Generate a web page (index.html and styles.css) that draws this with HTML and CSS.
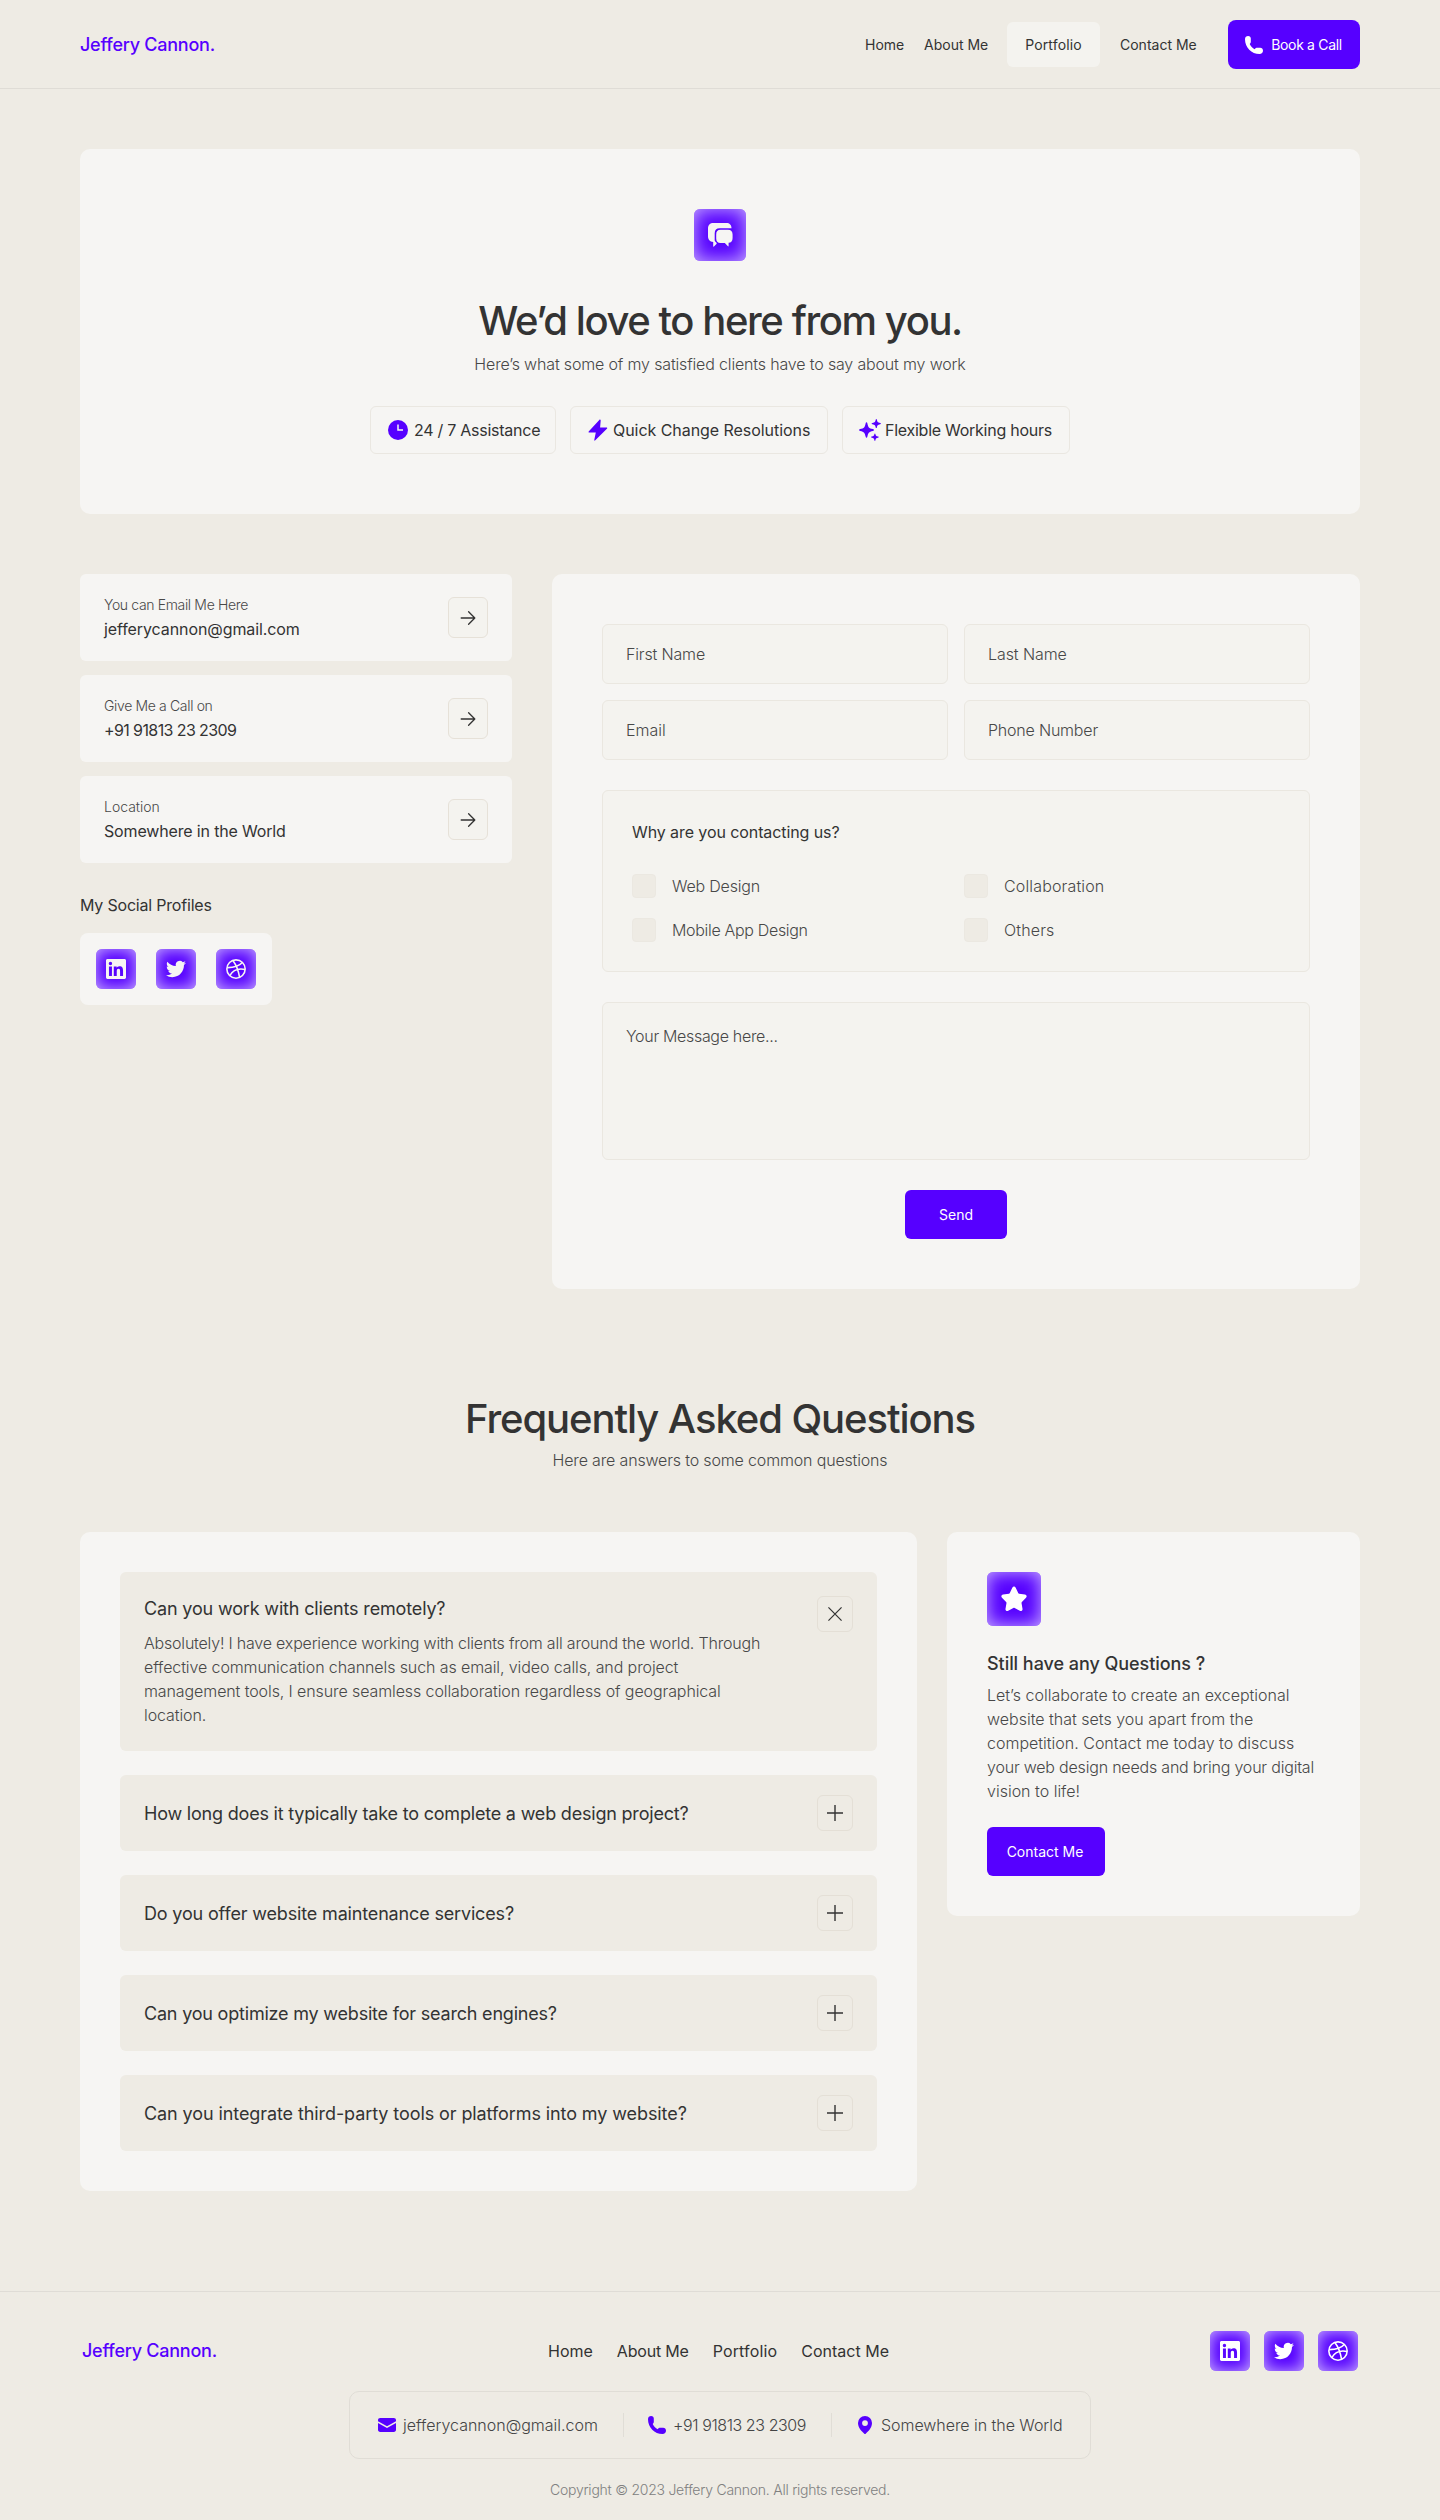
FILE: index.html
```html
<!DOCTYPE html>
<html lang="en">
<head>
<meta charset="utf-8">
<title>Jeffery Cannon – Contact</title>
<link rel="stylesheet" href="styles.css">
</head>
<body>
<svg class="sprite" aria-hidden="true">
  <symbol id="phone" viewBox="0 0 20 20"><path d="M1 4.200C1 2.200 2.400 1 4.100 1c1.700 0 2.700 1 2.700 2.500v3.200c0 1-.5 1.600-1.100 2.300.9 2 2.800 4.100 5 5.200.8-.9 1.600-1.400 2.700-1.400h2.700c1.800 0 2.900 1.100 2.900 2.900S17.600 19 15.600 19C7.500 19 1 12.300 1 4.200Z"/></symbol>
  <symbol id="mail" viewBox="0 0 18 14"><path d="M0 3.300V2.200C0 .9.900 0 2.200 0h13.600C17.100 0 18 .9 18 2.200v1.100L9 8.300ZM0 5v6.800C0 13.100.9 14 2.200 14h13.600c1.300 0 2.200-.9 2.200-2.200V5L9 10Z"/></symbol>
  <symbol id="pin" viewBox="0 0 14 18"><path fill-rule="evenodd" d="M7 0a7 7 0 0 0-7 7c0 5 4 8.500 6.300 10.700q.7.600 1.400 0C10 15.500 14 12 14 7a7 7 0 0 0-7-7Zm0 4.200a2.900 2.900 0 1 1 0 5.800 2.900 2.900 0 0 1 0-5.800Z"/></symbol>
  <symbol id="linkedin" viewBox="0 0 24 24"><path d="M20.447 20.452h-3.554v-5.569c0-1.328-.027-3.037-1.852-3.037-1.853 0-2.136 1.445-2.136 2.939v5.667H9.351V9h3.414v1.561h.046c.477-.9 1.637-1.850 3.370-1.850 3.601 0 4.267 2.370 4.267 5.455v6.286zM5.337 7.433a2.062 2.062 0 0 1-2.063-2.065 2.064 2.064 0 1 1 2.063 2.065zm1.782 13.019H3.555V9h3.564v11.452zM22.225 0H1.771C.792 0 0 .774 0 1.729v20.542C0 23.227.792 24 1.771 24h20.451C23.200 24 24 23.227 24 22.271V1.729C24 .774 23.200 0 22.222 0h.003z"/></symbol>
  <symbol id="twitter" viewBox="0 0 24 24"><path d="M23.953 4.570a10 10 0 01-2.825.775 4.958 4.958 0 002.163-2.723c-.951.555-2.005.959-3.127 1.184a4.920 4.920 0 00-8.384 4.482C7.690 8.095 4.067 6.130 1.640 3.162a4.822 4.822 0 00-.666 2.475c0 1.710.870 3.213 2.188 4.096a4.904 4.904 0 01-2.228-.616v.060a4.923 4.923 0 003.946 4.827 4.996 4.996 0 01-2.212.085 4.936 4.936 0 004.604 3.417 9.867 9.867 0 01-6.102 2.105c-.390 0-.779-.023-1.170-.067a13.995 13.995 0 007.557 2.209c9.053 0 13.998-7.496 13.998-13.985 0-.210 0-.420-.015-.630A9.935 9.935 0 0024 4.590z"/></symbol>
  <symbol id="dribbble" viewBox="0 0 24 24"><g fill="none" stroke="currentColor" stroke-width="1.900"><circle cx="12" cy="12" r="11"/><path d="M8.200 1.700C12 6.500 14.800 13 16.300 22.100M1.200 10.300c7.300.1 13.900-1 18.400-6M4.600 19.900C8.500 13 15 11 22.900 12.600"/></g></symbol>
  <symbol id="arrow" viewBox="0 0 16 16"><path d="M1.200 8h13.500M8.600 1.800 14.800 8l-6.200 6.200" fill="none" stroke="currentColor" stroke-width="1.300" stroke-linecap="round" stroke-linejoin="round"/></symbol>
  <symbol id="plus" viewBox="0 0 16 16"><path d="M8 0v16M0 8h16" fill="none" stroke="currentColor" stroke-width="1.400"/></symbol>
  <symbol id="close" viewBox="0 0 16 16"><path d="m.5.500 15 15M15.500.5.500 15.500" fill="none" stroke="currentColor" stroke-width="1.400"/></symbol>
</svg>

<header class="header">
  <a class="logo">Jeffery Cannon.</a>
  <nav class="nav">
    <a class="nav-link nav-home">Home</a>
    <a class="nav-link nav-about">About Me</a>
    <a class="nav-link nav-active">Portfolio</a>
    <a class="nav-link nav-contact">Contact Me</a>
    <a class="btn btn-call"><svg class="i20"><use href="#phone"/></svg><span class="ls-30">Book a Call</span></a>
  </nav>
</header>

<main class="main">
  <section class="hero">
    <div class="glow glow-hero">
      <svg class="chat" viewBox="0 0 26 26"><path d="M6.500 1h13C22.500 1 24.500 3 24.500 6v.200H12.600C9.500 6.200 7.700 8 7.700 11.200v7.300L8.600 20c1 .8 1.600 1.300.6 2.300L7 24.500c-.5.5-.8.2-.8-.4v-4.200C3 19.700 1 17.500 1 14.500V6.500C1 3 3 1 6.500 1Z"/><path d="M13.500 7.800H21c3 0 4.600 1.700 4.600 4.700V16c0 3-1.400 4.600-4 4.800v3c0 .7-.5.8-.9.3l-2.900-3.200h-4.300c-3 0-4.300-1.600-4.300-4.500v-4c0-3 1.400-4.600 4.300-4.600Z"/></svg>
    </div>
    <h1 class="title hero-title">We’d love to here from you.</h1>
    <p class="sub ls-15">Here’s what some of my satisfied clients have to say about my work</p>
    <div class="pills">
      <div class="pill pill-a"><svg class="i20" viewBox="0 0 20 20"><circle cx="10" cy="10" r="10"/><path d="M10 4.500v5.600h5" fill="none" stroke="#f6f5f3" stroke-width="1.500"/></svg><span class="ls-25">24 / 7 Assistance</span></div>
      <div class="pill pill-b"><svg class="i22" viewBox="0 0 22 22"><path d="M12.300.9 1.900 12.200c-.7.8-.4 1.300.5 1.300h6.400L7.300 20.800c-.2.9.4 1.100 1 .5L19.900 9.700c.7-.7.400-1.300-.500-1.300h-6.300l.6-6.900c0-.9-.8-1.200-1.400-.6Z"/></svg><span class="ls-5">Quick Change Resolutions</span></div>
      <div class="pill pill-c"><svg class="i22" viewBox="0 0 22 22"><path d="M7.500 3.200q.6 0 .9 1.200c.8 3.800 1.300 4.800 5.500 5.700q1.200.3 1.200.9t-1.200.9c-4.200.9-4.700 1.900-5.500 5.700q-.3 1.200-.9 1.200t-.9-1.200c-.8-3.800-1.300-4.800-5.500-5.700Q0 11.600 0 11t1.100-.9c4.200-.9 4.700-1.900 5.500-5.700q.3-1.200.9-1.200ZM17.300 0q.4 0 .6.700c.4 2.200.7 2.600 3.300 3.200q.8.200.8.600t-.8.700c-2.600.6-2.900 1-3.300 3.200q-.2.700-.6.700t-.6-.7c-.4-2.200-.7-2.600-3.300-3.200q-.8-.2-.8-.7t.8-.6c2.600-.6 2.900-1 3.300-3.200q.2-.7.600-.7ZM15.900 14.400q.4 0 .5.600c.3 1.700.6 2 2.700 2.500q.7.200.7.600t-.7.600c-2.100.5-2.400.8-2.700 2.500q-.1.700-.5.700t-.5-.7c-.3-1.700-.6-2-2.700-2.500q-.7-.2-.7-.6t.7-.6c2.100-.5 2.400-.8 2.700-2.500q.1-.6.500-.6Z"/></svg><span class="ls-25">Flexible Working hours</span></div>
    </div>
  </section>

  <section class="contact">
    <div class="side">
      <div class="info"><div class="info-text"><p class="label ls-35">You can Email Me Here</p><p class="value ls-10">jefferycannon@gmail.com</p></div><span class="arrow"><svg class="i16"><use href="#arrow"/></svg></span></div>
      <div class="info"><div class="info-text"><p class="label ls-35">Give Me a Call on</p><p class="value ls-60">+91 91813 23 2309</p></div><span class="arrow"><svg class="i16"><use href="#arrow"/></svg></span></div>
      <div class="info"><div class="info-text"><p class="label">Location</p><p class="value ls-15">Somewhere in the World</p></div><span class="arrow"><svg class="i16"><use href="#arrow"/></svg></span></div>
      <h2 class="social-title ls-20">My Social Profiles</h2>
      <div class="social-card">
        <a class="glow"><svg class="i20"><use href="#linkedin"/></svg></a>
        <a class="glow"><svg class="i20"><use href="#twitter"/></svg></a>
        <a class="glow"><svg class="i20"><use href="#dribbble"/></svg></a>
      </div>
    </div>

    <form class="form">
      <div class="fields">
        <div class="field ls-15">First Name</div>
        <div class="field ls-10">Last Name</div>
        <div class="field">Email</div>
        <div class="field ls-20">Phone Number</div>
      </div>
      <div class="reasons">
        <p class="reasons-title ls-10">Why are you contacting us?</p>
        <div class="checks">
          <label class="check"><i class="box"></i><span class="ls-20">Web Design</span></label>
          <label class="check"><i class="box"></i><span class="ls15">Collaboration</span></label>
          <label class="check"><i class="box"></i><span class="ls-30">Mobile App Design</span></label>
          <label class="check"><i class="box"></i><span class="ls15">Others</span></label>
        </div>
      </div>
      <div class="message ls-30">Your Message here...</div>
      <a class="btn btn-send">Send</a>
    </form>
  </section>

  <section class="faq">
    <h2 class="title faq-title">Frequently Asked Questions</h2>
    <p class="sub ls-15">Here are answers to some common questions</p>
    <div class="faq-grid">
      <div class="faq-list">
        <div class="item open">
          <div>
            <h3 class="q ls-15">Can you work with clients remotely?</h3>
            <p class="answer"><span class="ls-20">Absolutely! I have experience working with clients from all around the world. Through</span><br>effective communication channels such as email, video calls, and project<br>management tools, I ensure seamless collaboration regardless of geographical<br>location.</p>
          </div>
          <span class="toggle"><svg class="i14"><use href="#close"/></svg></span>
        </div>
        <div class="item"><h3 class="q ls-20">How long does it typically take to complete a web design project?</h3><span class="toggle"><svg class="i16"><use href="#plus"/></svg></span></div>
        <div class="item"><h3 class="q ls-15">Do you offer website maintenance services?</h3><span class="toggle"><svg class="i16"><use href="#plus"/></svg></span></div>
        <div class="item"><h3 class="q ls-20">Can you optimize my website for search engines?</h3><span class="toggle"><svg class="i16"><use href="#plus"/></svg></span></div>
        <div class="item"><h3 class="q ls-10">Can you integrate third-party tools or platforms into my website?</h3><span class="toggle"><svg class="i16"><use href="#plus"/></svg></span></div>
      </div>
      <aside class="help">
        <div class="glow glow-star"><svg class="star" viewBox="0 0 26 26"><path d="M11.300 1.700c.8-1.600 2.600-1.600 3.400 0l2.500 5.300c.2.400.5.600.9.700l5.800.8c1.800.3 2.300 2 1.100 3.300l-4.100 4.100c-.3.300-.4.700-.4 1.100l1 5.800c.3 1.700-1.200 2.800-2.700 2l-5.200-2.800c-.4-.2-.8-.2-1.200 0l-5.200 2.800c-1.500.8-3-.3-2.700-2l1-5.800c.1-.4-.1-.8-.4-1.100L1 11.800C-.2 10.500.3 8.800 2.100 8.500l5.800-.8c.4-.1.700-.3.900-.7Z"/></svg></div>
        <h3 class="help-title">Still have any Questions ?</h3>
        <p class="help-text">Let’s collaborate to create an exceptional<br>website that sets you apart from the<br>competition. Contact me today to discuss<br><span class="ls-20">your web design needs and bring your digital</span><br>vision to life!</p>
        <a class="btn btn-contact">Contact Me</a>
      </aside>
    </div>
  </section>
</main>

<footer class="footer">
  <div class="footer-top">
    <a class="logo">Jeffery Cannon.</a>
    <nav class="footer-nav"><a>Home</a><a class="ls-20">About Me</a><a class="ls15">Portfolio</a><a>Contact Me</a></nav>
    <div class="footer-social">
      <a class="glow"><svg class="i20"><use href="#linkedin"/></svg></a>
      <a class="glow"><svg class="i20"><use href="#twitter"/></svg></a>
      <a class="glow"><svg class="i20"><use href="#dribbble"/></svg></a>
    </div>
  </div>
  <div class="footer-contacts">
    <div class="fc fc-mail"><svg class="mail"><use href="#mail"/></svg><span>jefferycannon@gmail.com</span></div>
    <div class="fc fc-phone"><svg class="i20"><use href="#phone"/></svg><span class="ls-40">+91 91813 23 2309</span></div>
    <div class="fc fc-pin"><svg class="pin"><use href="#pin"/></svg><span class="ls-5">Somewhere in the World</span></div>
  </div>
  <p class="copyright">Copyright © 2023 Jeffery Cannon. All rights reserved.</p>
</footer>
</body>
</html>
```
FILE: styles.css
```css
* { box-sizing: border-box; margin: 0; padding: 0; }

body {
  background: #eeebe4;
  color: #333;
  font: 400 16px/24px Inter, "Open Sans", sans-serif;
}

svg { display: block; fill: currentColor; flex: none; }
.sprite { display: none; }
.i14 { width: 14px; height: 14px; }
.i16 { width: 16px; height: 16px; }
.i20 { width: 20px; height: 20px; }
.i22 { width: 22px; height: 22px; }

/* tracking steps, in hundredths of a pixel */
.ls15 { letter-spacing: .15px; }
.ls-5 { letter-spacing: -.05px; }
.ls-10 { letter-spacing: -.09px; }
.ls-15 { letter-spacing: -.16px; }
.ls-20 { letter-spacing: -.2px; }
.ls-25 { letter-spacing: -.26px; }
.ls-30 { letter-spacing: -.32px; }
.ls-35 { letter-spacing: -.35px; }
.ls-40 { letter-spacing: -.42px; }
.ls-60 { letter-spacing: -.6px; }

.header {
  display: flex;
  align-items: center;
  justify-content: space-between;
  height: 89px;
  padding: 1px 80px 0;
  border-bottom: 1px solid #dfdcd6;
}
.logo { color: #5600ff; font-size: 18px; font-weight: 500; letter-spacing: -.25px; }
.nav { display: flex; align-items: center; font-size: 14px; }
.nav-link { white-space: nowrap; }
.nav-home { width: 59px; }
.nav-about { width: 83px; }
.nav-active {
  width: 93px;
  height: 45px;
  line-height: 45px;
  text-align: center;
  letter-spacing: .15px;
  background: #f4f3ef;
  border-radius: 6px;
}
.nav-contact { width: 128px; padding-left: 20px; }

.btn {
  display: flex;
  align-items: center;
  justify-content: center;
  height: 49px;
  border-radius: 6px;
  background: #5600ff;
  color: #fff;
  font-size: 14px;
  font-weight: 400;
  white-space: nowrap;
}
.btn-call { width: 132px; padding-right: 2px; gap: 7px; border-radius: 8px; }
.btn-send { width: 102px; margin: 30px auto 0; }
.btn-contact { width: 118px; margin-top: 24px; padding-right: 2px; }

.main { padding: 60px 80px 0; }

.glow {
  display: flex;
  align-items: center;
  justify-content: center;
  width: 40px;
  height: 40px;
  border-radius: 6px;
  background: #5600ff;
  color: #f6f5f3;
  box-shadow: inset 0 0 16px rgba(255, 255, 255, .7);
}
.glow-hero { width: 52px; height: 52px; box-shadow: inset 0 0 19px rgba(255, 255, 255, .7); }
.glow-star { width: 54px; height: 54px; color: #fff; box-shadow: inset 0 0 18px rgba(255, 255, 255, .7); }
.chat { width: 26px; height: 26px; }
.star { width: 26px; height: 26px; }

.title { font-size: 40px; font-weight: 500; line-height: 50px; text-align: center; white-space: nowrap; }
.sub { color: #484848; font-weight: 300; text-align: center; }

.hero {
  display: flex;
  flex-direction: column;
  align-items: center;
  height: 365px;
  padding-top: 60px;
  background: #f6f5f3;
  border-radius: 10px;
}
.hero-title { margin-top: 35px; letter-spacing: -1.42px; }
.hero .sub { margin-top: 6px; }
.pills { display: flex; gap: 14px; margin-top: 30px; }
.pill {
  display: flex;
  align-items: center;
  height: 48px;
  border: 1px solid #eae7e1;
  border-radius: 6px;
  white-space: nowrap;
}
.pill svg { color: #5600ff; }
.pill-a { width: 186px; padding-left: 17px; gap: 6px; }
.pill-b { width: 258px; padding-left: 16px; gap: 4px; }
.pill-c { width: 228px; padding-left: 16px; gap: 4px; }

.contact {
  display: grid;
  grid-template-columns: 432px 808px;
  justify-content: space-between;
  align-items: start;
  margin-top: 60px;
}

.info {
  display: flex;
  align-items: center;
  justify-content: space-between;
  height: 87px;
  margin-bottom: 14px;
  padding: 0 24px;
  background: #f6f5f3;
  border-radius: 6px;
}
.info-text { padding-bottom: 2px; }
.label { color: #484848; font-size: 14px; font-weight: 300; }
.arrow {
  display: grid;
  place-items: center;
  width: 40px;
  height: 41px;
  border: 1px solid #e6e1d8;
  border-radius: 6px;
  background: #f4f3ef;
}
.social-title { margin-top: 30px; font-size: 16px; font-weight: 400; }
.social-card {
  display: flex;
  gap: 20px;
  width: 192px;
  margin-top: 16px;
  padding: 16px;
  background: #f6f5f3;
  border-radius: 8px;
}

.form { height: 715px; padding: 50px; background: #f6f5f3; border-radius: 10px; font-weight: 300; color: #484848; }
.fields { display: grid; grid-template-columns: 1fr 1fr; gap: 16px; }
.field, .reasons, .message { border: 1px solid #eae7e0; border-radius: 6px; background: #f4f3ef; }
.field { height: 60px; padding: 0 23px; line-height: 58px; }
.reasons { height: 182px; margin-top: 30px; padding: 29px; }
.reasons-title { color: #333; font-weight: 400; }
.checks { display: grid; grid-template-columns: 332px 1fr; gap: 20px 0; margin-top: 30px; }
.check { display: flex; align-items: center; gap: 16px; }
.box { width: 24px; height: 24px; border: 1px solid #ebe8e1; border-radius: 4px; background: #eeebe4; }
.message { height: 158px; margin-top: 30px; padding: 21px 23px; }

.faq { margin-top: 105px; }
.faq-title { letter-spacing: -1.08px; }
.faq .sub { margin-top: 4px; }
.faq-grid { display: grid; grid-template-columns: 837px 413px; justify-content: space-between; align-items: start; margin-top: 60px; }
.faq-list { display: flex; flex-direction: column; gap: 24px; padding: 40px; background: #f6f5f3; border-radius: 10px; }
.item {
  display: flex;
  align-items: center;
  justify-content: space-between;
  height: 76px;
  padding: 0 24px;
  background: #eeebe4;
  border-radius: 6px;
}
.open { align-items: flex-start; height: 179px; padding-top: 24px; }
.q { font-size: 18px; font-weight: 400; line-height: 25px; white-space: nowrap; }
.answer { margin-top: 10px; color: #484848; font-weight: 300; letter-spacing: -.1px; white-space: nowrap; }
.toggle { display: grid; place-items: center; width: 36px; height: 36px; border: 1px solid #e4dfd6; border-radius: 6px; }

.help { height: 384px; padding: 40px; background: #f6f5f3; border-radius: 10px; }
.help-title { margin-top: 25px; font-size: 18px; font-weight: 500; line-height: 25px; letter-spacing: -.05px; }
.help-text { margin-top: 7px; color: #484848; font-weight: 300; white-space: nowrap; }

.footer { height: 229px; margin-top: 100px; border-top: 1px solid #dfdcd6; }
.footer-top { display: grid; grid-template-columns: 1fr auto 1fr; align-items: center; padding: 39px 82px 0; }
.footer-nav { display: flex; gap: 24px; padding-right: 3px; }
.footer-social { display: flex; gap: 14px; justify-self: end; }
.footer-social .glow { color: #fff; }
.footer-contacts {
  display: flex;
  align-items: center;
  width: 742px;
  height: 68px;
  margin: 20px auto 0;
  padding-left: 28px;
  border: 1px solid #e0ddd6;
  border-radius: 10px;
  color: #444;
  font-weight: 300;
}
.fc { display: flex; align-items: center; height: 24px; white-space: nowrap; }
.fc svg { color: #5600ff; }
.fc-mail { width: 246px; gap: 7px; border-right: 1px solid #e0ddd6; }
.fc-phone { width: 208px; padding-left: 23px; gap: 6px; border-right: 1px solid #e0ddd6; }
.fc-pin { padding-left: 26px; gap: 9px; }
.mail { width: 18px; height: 14px; }
.pin { width: 14px; height: 18px; }
.copyright { margin-top: 19px; color: #808080; font-size: 14px; font-weight: 300; letter-spacing: -.25px; text-align: center; }
```
